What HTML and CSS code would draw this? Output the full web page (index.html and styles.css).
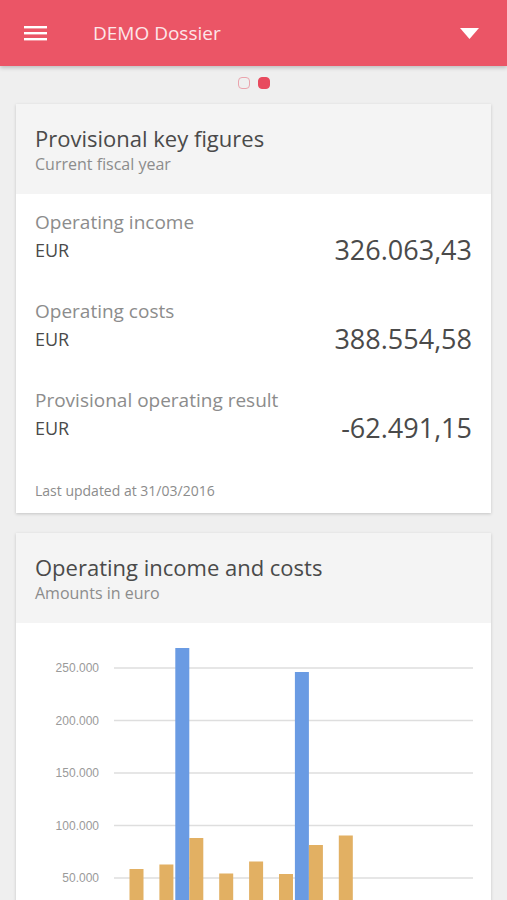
FILE: index.html
```html
<!DOCTYPE html>
<html lang="en">
  <head>
    <meta charset="UTF-8" />
    <meta name="viewport" content="width=device-width, initial-scale=1.0" />
    <title>DEMO Dossier</title>
    <link rel="stylesheet" href="styles.css">
  </head>
  <body>
    <header class="topbar">
      <svg class="menu-icon" width="23" height="16" viewBox="0 0 23 16">
        <rect x="0" y="1" width="23" height="2.4" fill="#fff" />
        <rect x="0" y="7" width="23" height="2.4" fill="#fff" />
        <rect x="0" y="13" width="23" height="2.4" fill="#fff" />
      </svg>
      <span class="topbar-title">DEMO Dossier</span>
      <svg class="dropdown-icon" width="19" height="11" viewBox="0 0 19 11">
        <polygon points="0,0 19,0 9.5,11" fill="#fff" />
      </svg>
    </header>

    <div class="pager">
      <span class="dot"></span>
      <span class="dot active"></span>
    </div>

    <div class="card">
      <div class="card-header">
        <h2>Provisional key figures</h2>
        <p>Current fiscal year</p>
      </div>
      <div class="card-body">
        <div class="figure">
          <div>
            <div class="figure-label">Operating income</div>
            <div class="figure-unit">EUR</div>
          </div>
          <div class="figure-value">326.063,43</div>
        </div>
        <div class="figure">
          <div>
            <div class="figure-label">Operating costs</div>
            <div class="figure-unit">EUR</div>
          </div>
          <div class="figure-value">388.554,58</div>
        </div>
        <div class="figure">
          <div>
            <div class="figure-label">Provisional operating result</div>
            <div class="figure-unit">EUR</div>
          </div>
          <div class="figure-value">-62.491,15</div>
        </div>
        <div class="updated">Last updated at 31/03/2016</div>
      </div>
    </div>

    <div class="card">
      <div class="card-header">
        <h2>Operating income and costs</h2>
        <p>Amounts in euro</p>
      </div>
      <div class="chart">
        <svg width="475" height="300" viewBox="0 0 475 300">
          <g class="grid">
            <line x1="98" y1="45" x2="457" y2="45" />
            <line x1="98" y1="97.5" x2="457" y2="97.5" />
            <line x1="98" y1="150" x2="457" y2="150" />
            <line x1="98" y1="202.5" x2="457" y2="202.5" />
            <line x1="98" y1="255" x2="457" y2="255" />
          </g>
          <g class="axis-labels">
            <text x="83" y="49">250.000</text>
            <text x="83" y="101.5">200.000</text>
            <text x="83" y="154">150.000</text>
            <text x="83" y="206.5">100.000</text>
            <text x="83" y="259">50.000</text>
          </g>
          <g class="bars-income">
            <rect x="159.3" y="25" width="14" height="282.5" />
            <rect x="278.9" y="49" width="14" height="258.5" />
          </g>
          <g class="bars-costs">
            <rect x="113.5" y="246" width="14" height="61.5" />
            <rect x="143.4" y="241.5" width="14" height="66" />
            <rect x="173.3" y="215" width="14" height="92.5" />
            <rect x="203.2" y="250.5" width="14" height="57" />
            <rect x="233.1" y="238.5" width="14" height="69" />
            <rect x="263" y="251" width="14" height="56.5" />
            <rect x="292.9" y="222" width="14" height="85.5" />
            <rect x="322.8" y="212.5" width="14" height="95" />
          </g>
        </svg>
      </div>
    </div>
  </body>
</html>
```

FILE: styles.css
```css
body {
  font-family: "Open Sans", Arial, sans-serif;
  margin: 0;
  padding: 0;
  background-color: #efefef;
  color: #4a4a4a;
}
.topbar {
  height: 66px;
  background-color: #eb5566;
  display: flex;
  align-items: center;
  padding: 0 28px 0 24px;
  box-shadow: 0 2px 4px rgba(0, 0, 0, 0.2);
  position: relative;
}
.menu-icon {
  flex-shrink: 0;
}
.topbar-title {
  flex: 1;
  margin-left: 46px;
  margin-bottom: 1px;
  color: #fde6e9;
  font-size: 19px;
}
.dropdown-icon {
  margin-top: 1px;
}
.pager {
  display: flex;
  justify-content: center;
  gap: 8px;
  padding: 11px 0 15px;
}
.dot {
  width: 12px;
  height: 12px;
  box-sizing: border-box;
  border-radius: 4px;
  border: 1.5px solid #eaa4ad;
}
.dot.active {
  background-color: #e84a5e;
  border-color: #e84a5e;
}
.card {
  margin: 0 16px 20px;
  background: white;
  box-shadow: 0 1px 3px rgba(0, 0, 0, 0.18);
}
.card-header {
  background-color: #f4f4f4;
  padding: 19px 19px 16px;
  height: 90px;
  box-sizing: border-box;
}
.card-header h2 {
  margin: 0;
  font-size: 22px;
  font-weight: normal;
  line-height: 30px;
  color: #4a4a4a;
}
.card-header p {
  margin: 0;
  font-size: 16px;
  line-height: 22px;
  color: #8c8c8c;
}
.card-body {
  padding: 15px 19px 13px;
}
.figure {
  display: flex;
  justify-content: space-between;
  align-items: flex-end;
  margin-bottom: 33px;
}
.figure-label {
  font-size: 19px;
  line-height: 26px;
  color: #8c8c8c;
}
.figure-unit {
  font-size: 18px;
  line-height: 30px;
  color: #4a4a4a;
}
.figure-value {
  font-size: 27px;
  line-height: 31px;
  color: #4a4a4a;
}
.updated {
  margin-top: 38px;
  font-size: 14px;
  color: #8c8c8c;
}
.chart svg {
  display: block;
}
.grid line {
  stroke: #dedede;
  stroke-width: 1.5;
}
.axis-labels text {
  font-family: "Liberation Sans", Arial, sans-serif;
  font-size: 12px;
  fill: #9a9a9a;
  text-anchor: end;
}
.bars-income rect {
  fill: #6a9be3;
}
.bars-costs rect {
  fill: #e2b063;
}
```
